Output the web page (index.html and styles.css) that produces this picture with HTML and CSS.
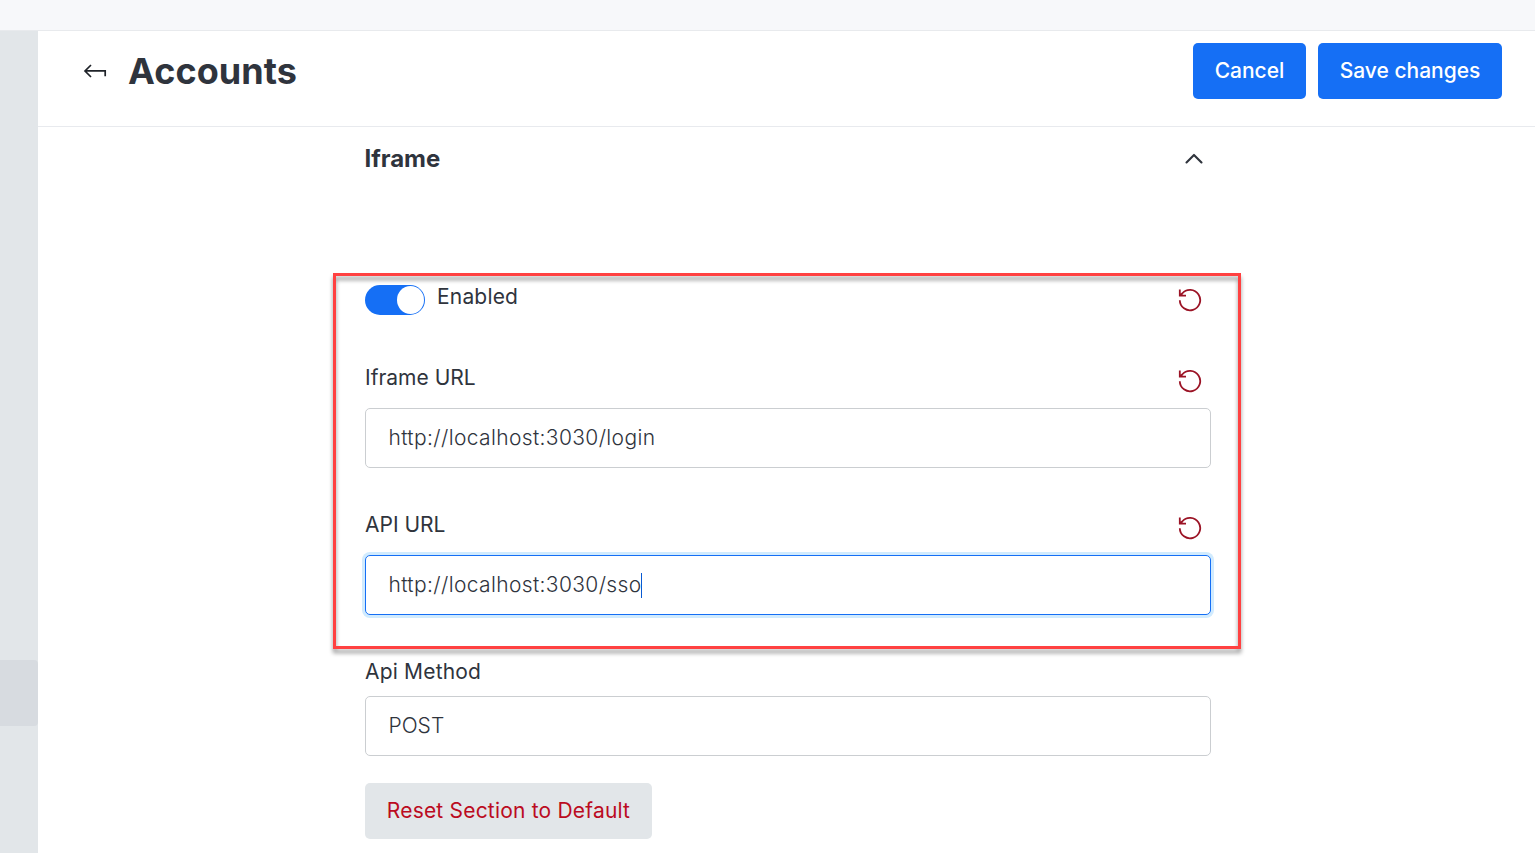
FILE: index.html
```html
<!DOCTYPE html>
<html lang="en">
<head>
<meta charset="utf-8">
<title>Accounts</title>
<link rel="stylesheet" href="styles.css">
</head>
<body>
<svg width="0" height="0" class="sprite">
  <symbol id="reset" viewBox="0 0 24 24">
    <path d="M1.8 12.2A10.2 10.2 0 1 0 4.2 5.5L2 7.5M1.8 1.4V7.6H8" fill="none" stroke="currentColor" stroke-width="1.8"/>
  </symbol>
</svg>
<div class="topbar"></div>
<div class="shell">
  <aside class="sidebar"><div class="sidebar-item"></div></aside>
  <main class="main">
    <header class="header">
      <svg class="back" viewBox="0 0 24 16"><path d="M8 2L2 8L8 14M2 7.9H22.2V13.3" fill="none" stroke="#1f2329" stroke-width="1.7"/></svg>
      <h1 class="title">Accounts</h1>
      <div class="actions">
        <button class="button">Cancel</button>
        <button class="button save">Save changes</button>
      </div>
    </header>
    <section class="section">
      <div class="section-head">
        <h2 class="section-title">Iframe</h2>
        <svg class="chevron" viewBox="0 0 20 12"><path d="M2.5 9.5L10 1.9L17.5 9.5" fill="none" stroke="#2f343d" stroke-width="2.1" stroke-linecap="round" stroke-linejoin="round"/></svg>
      </div>
      <div class="highlight"></div>
      <div class="row toggle-row">
        <span class="switch"><span class="knob"></span></span>
        <span class="label">Enabled</span>
        <svg class="reset"><use href="#reset"/></svg>
      </div>
      <div class="field">
        <div class="row"><span class="label url-label">Iframe URL</span><svg class="reset"><use href="#reset"/></svg></div>
        <div class="input url">http://localhost:3030/login</div>
      </div>
      <div class="field">
        <div class="row"><span class="label url-label">API URL</span><svg class="reset"><use href="#reset"/></svg></div>
        <div class="input url focused">http://localhost:3030/sso<span class="caret"></span></div>
      </div>
      <div class="field method">
        <div class="row"><span class="label">Api Method</span></div>
        <div class="input">POST</div>
      </div>
      <button class="button reset-section">Reset Section to Default</button>
    </section>
  </main>
</div>
</body>
</html>
```
FILE: styles.css
```css
* { box-sizing: border-box; }
body { margin: 0; height: 853px; overflow: hidden; background: #fff; color: #2f343d; font-family: Inter, sans-serif; }
.sprite { display: none; }
.topbar { height: 31px; background: #f7f8fa; border-bottom: 1px solid #e8eaed; }
.shell { display: flex; height: 822px; }
.sidebar { width: 38px; padding-top: 629px; background: #e2e6e9; }
.sidebar-item { height: 66px; background: #d7dbe0; border-radius: 0 4px 4px 0; }
.main { flex: 1; }
.header { display: flex; align-items: center; height: 96px; padding: 0 33px 15px 45px; border-bottom: 1px solid #e8eaee; }
.back { width: 24px; height: 16px; }
.title { margin: 0 0 0 21px; font-size: 36px; line-height: 48px; font-weight: 700; letter-spacing: .08px; }
.actions { display: flex; gap: 12px; margin-left: auto; }
.button { height: 56px; width: 113px; padding: 0; border: 0; border-radius: 5px; background: #156ff5; color: #fff; font: 500 21px/30px Inter, sans-serif; white-space: nowrap; }
.save { width: 184px; }
.section { position: relative; width: 846px; margin-left: 327px; }
.section-head { display: flex; align-items: center; justify-content: space-between; height: 64px; padding-right: 7px; margin-bottom: 94px; }
.section-title { margin: 0 0 0 -.6px; font-size: 24px; line-height: 36px; font-weight: 700; }
.chevron { width: 20px; height: 12px; }
.highlight { position: absolute; left: -32px; top: 146px; width: 908px; height: 376px; border: 3px solid #ff4141; filter: drop-shadow(0 4px 2px rgba(0,0,0,.42)); pointer-events: none; }
.row { display: flex; height: 30px; }
.label { font-size: 21px; line-height: 24px; font-weight: 400; letter-spacing: .18px; }
.url-label { letter-spacing: 0; }
.toggle-row { margin-bottom: 51px; }
.toggle-row .label { margin-left: 12px; }
.switch { display: flex; justify-content: flex-end; width: 60px; height: 30px; padding: 1px; border-radius: 15px; background: #156ff5; }
.knob { width: 27px; height: 28px; border-radius: 50%; background: #fff; }
.reset { width: 24px; height: 24px; margin: 3px 9px 0 auto; color: #9b1325; }
.field { margin-bottom: 45px; }
.field .row { height: 42px; }
.input { display: flex; align-items: center; height: 60px; padding: 0 22.5px; border: 1px solid #cbced1; border-radius: 5px; background: #fff; font-size: 21px; line-height: 30px; font-weight: 300; white-space: nowrap; }
.url { letter-spacing: .36px; }
.focused { border-color: #156ff5; box-shadow: 0 0 0 3px #d1ebfe; }
.caret { width: 1px; height: 25px; margin-left: -.7px; background: #095ad2; }
.field.method { margin-bottom: 27px; }
.method .row { height: 36px; }
.reset-section { display: block; width: 287px; background: #e2e6e9; color: #bb0b21; font-weight: 400; letter-spacing: .2px; }
```
